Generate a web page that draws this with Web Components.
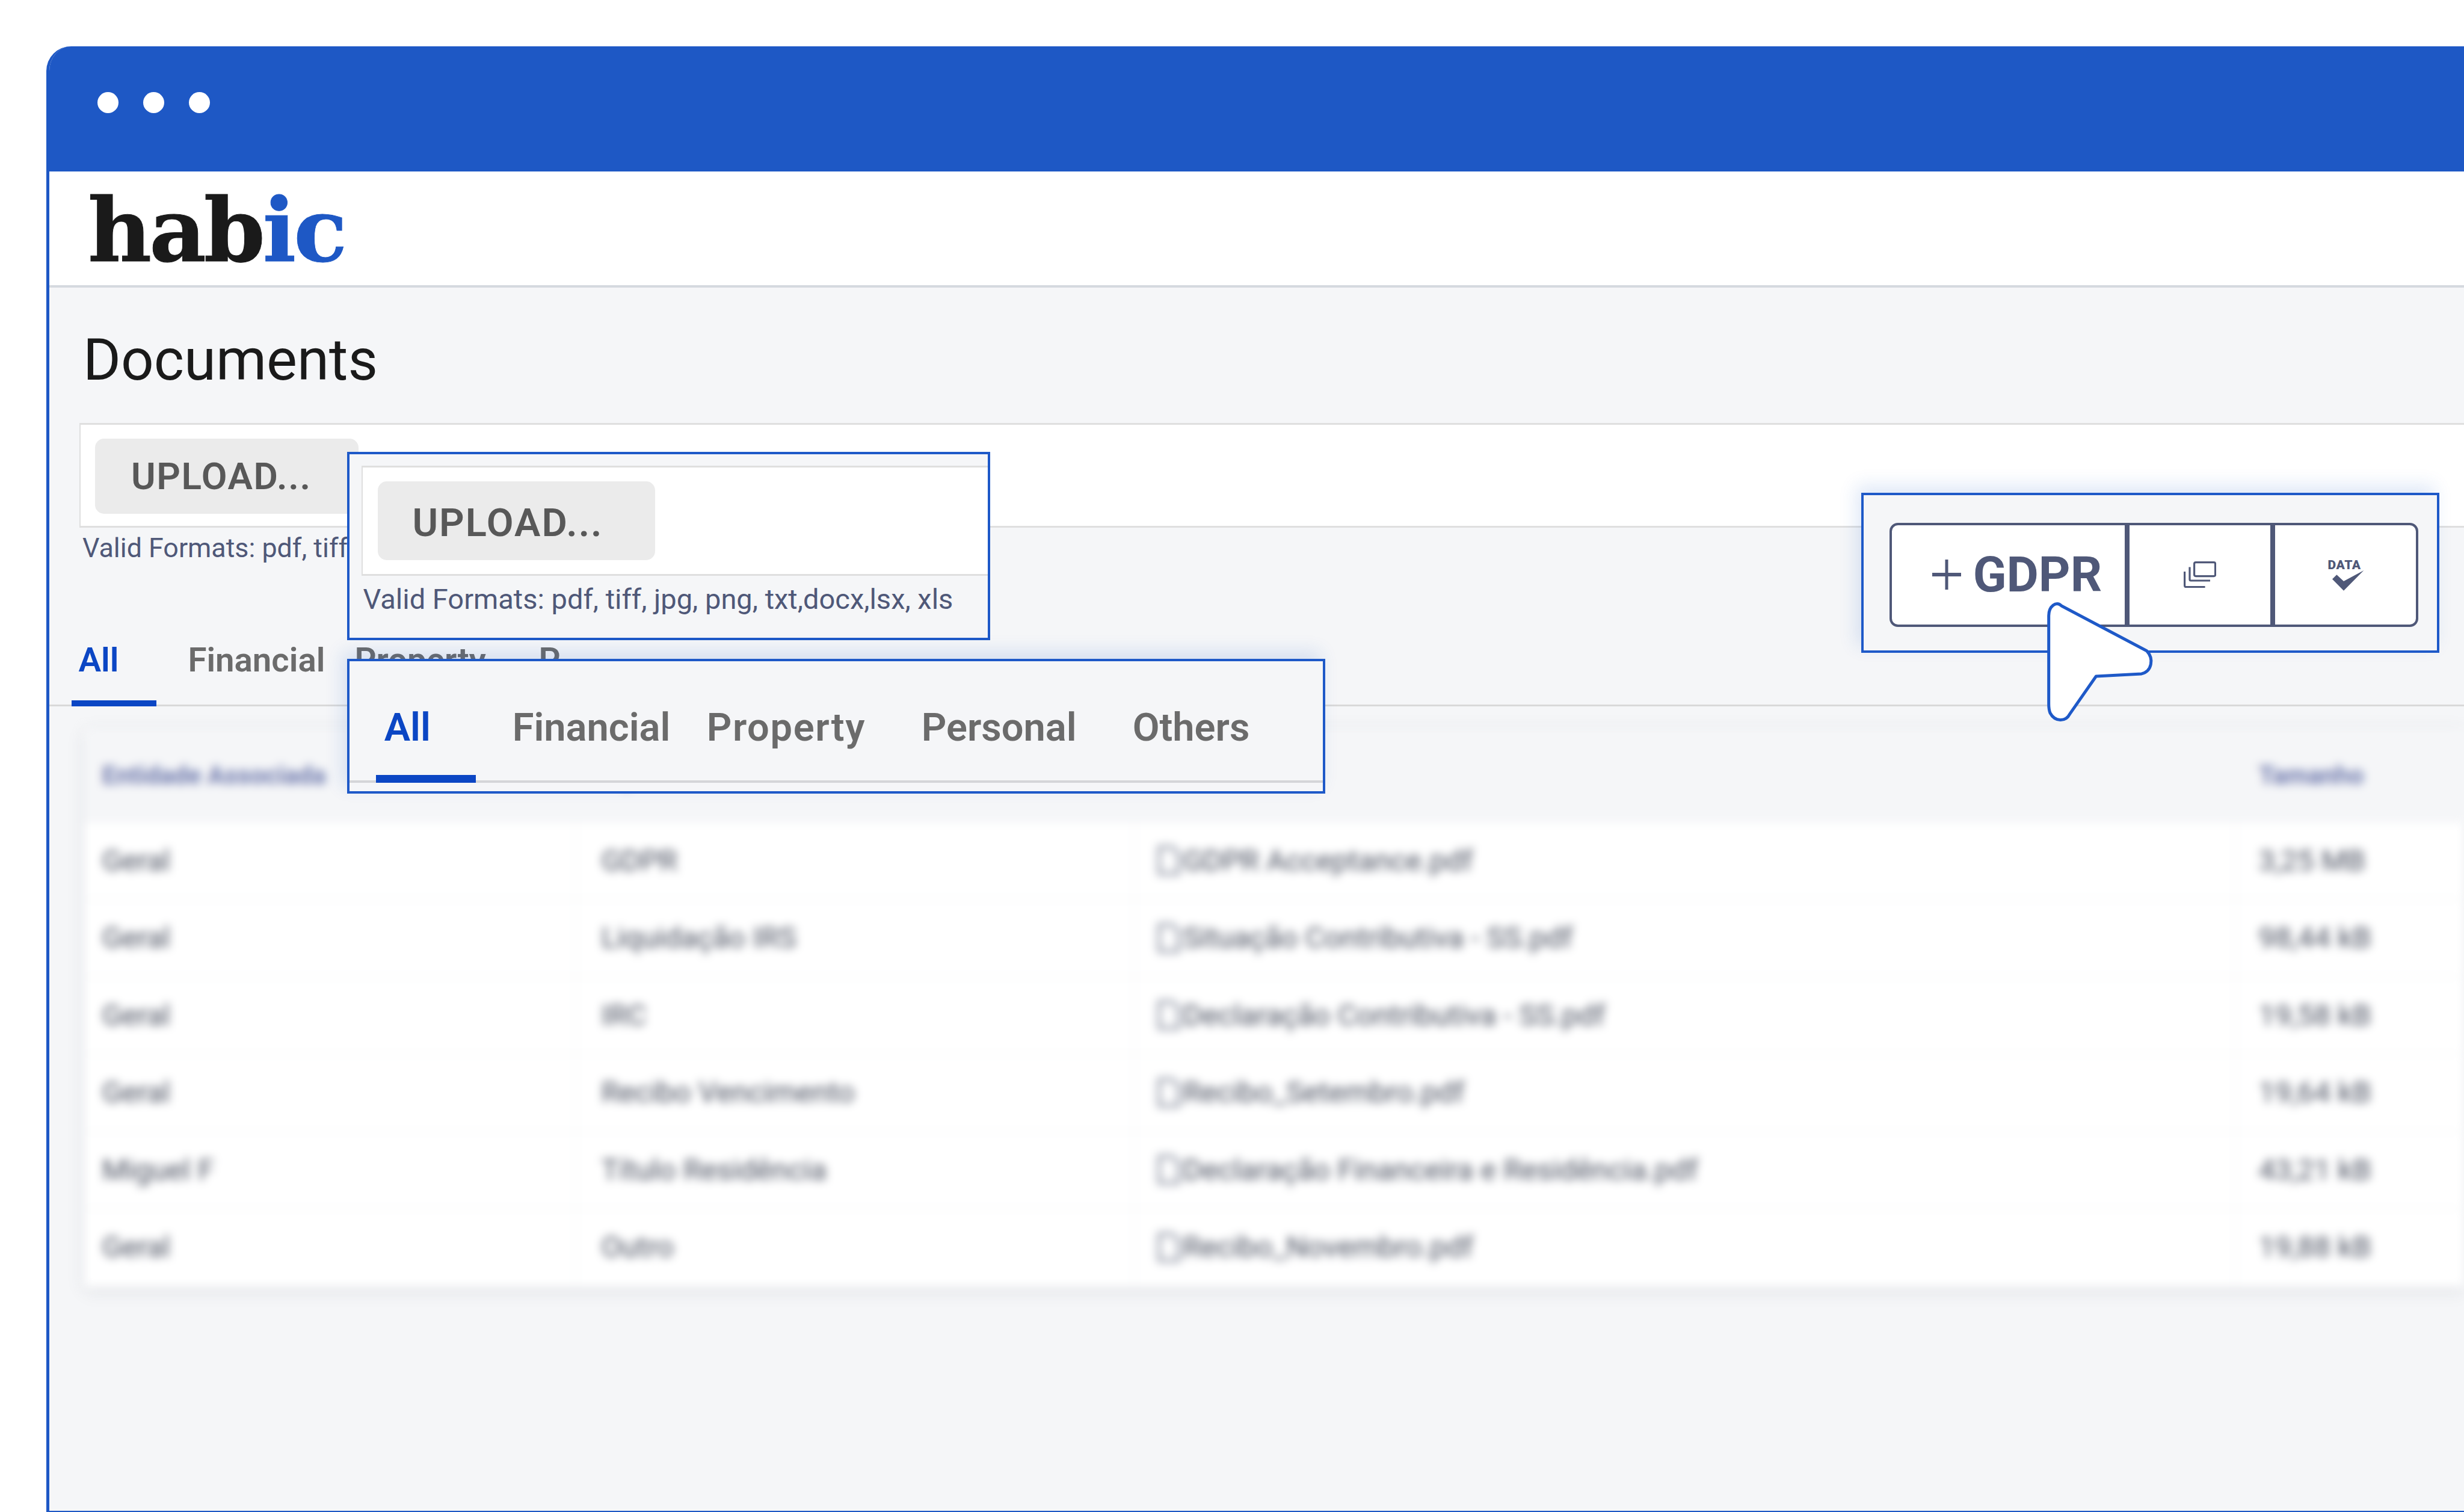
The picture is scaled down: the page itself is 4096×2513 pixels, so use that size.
<!DOCTYPE html>
<html>
<head>
<meta charset="utf-8">
<title>Documents</title>
<style>
  html, body { margin: 0; padding: 0; background: #fff; overflow: hidden; }
  body { font-family: Roboto, "Liberation Sans", sans-serif; }
</style>
</head>
<body>

<app-stage>
  <browser-frame>
    <brand-logo></brand-logo>
    <page-title>Documents</page-title>
    <upload-panel></upload-panel>
    <doc-tabs>
      <doc-tab active w="182">All</doc-tab>
      <doc-tab w="277">Financial</doc-tab>
      <doc-tab w="306">Property</doc-tab>
      <doc-tab w="302">P</doc-tab>
    </doc-tabs>
    <doc-table></doc-table>
  </browser-frame>

  <call-out style="left:577px;top:751px;width:1069px;height:313px;--glow:none">
    <upload-panel zoomed></upload-panel>
  </call-out>

  <call-out style="left:577px;top:1095px;width:1626px;height:224px">
    <doc-tabs zoomed>
      <doc-tab active w="213">All</doc-tab>
      <doc-tab w="323">Financial</doc-tab>
      <doc-tab w="357" style="letter-spacing:1.6px">Property</doc-tab>
      <doc-tab w="351">Personal</doc-tab>
      <doc-tab w="200">Others</doc-tab>
    </doc-tabs>
  </call-out>

  <call-out style="left:3094px;top:819px;width:961px;height:266px">
    <gdpr-actions></gdpr-actions>
  </call-out>

  <pointer-cursor></pointer-cursor>
</app-stage>

<script>
class AppStage extends HTMLElement {
  connectedCallback() {
    this.attachShadow({ mode: 'open' });
    this.shadowRoot.innerHTML = `
      <style>
        :host { display: block; position: relative; width: 4096px; height: 2513px; overflow: hidden; background: #fff; }
      </style>
      <slot></slot>
    `;
  }
}

class BrowserFrame extends HTMLElement {
  connectedCallback() {
    this.attachShadow({ mode: 'open' });
    this.shadowRoot.innerHTML = `
      <style>
        :host {
          display: flex; flex-direction: column; box-sizing: border-box;
          margin: 77px 0 0 77px; height: 2436px;
          border-left: 5.4px solid #1e58c5; border-bottom: 2.7px solid #1e58c5;
          border-top-left-radius: 41px;
          background: #f5f6f8; overflow: hidden;
        }
        .bar {
          flex: none; height: 208px; background: #1e58c5;
          margin-left: -5.4px; padding-left: 85px; box-sizing: border-box;
          display: flex; align-items: center; gap: 41px;
          padding-bottom: 21px;
        }
        .bar i { width: 35px; height: 35px; border-radius: 50%; background: #fff; }
      </style>
      <div class="bar"><i></i><i></i><i></i></div>
      <slot></slot>
    `;
  }
}

class BrandLogo extends HTMLElement {
  connectedCallback() {
    this.attachShadow({ mode: 'open' });
    this.shadowRoot.innerHTML = `
      <style>
        :host {
          display: flex; flex: none; align-items: center; box-sizing: border-box;
          height: 193px; padding: 6px 0 0 64px;
          background: #fff; border-bottom: 4.4px solid #d5d9df;
        }
        span {
          font: 700 146px/1 "DejaVu Serif", serif; letter-spacing: -4px;
          color: #1a1a1a; -webkit-text-stroke: 1px currentColor;
        }
        .ic { color: #1e58c5; }
      </style>
      <span>hab</span><span class="ic">ic</span>
    `;
  }
}

class PageTitle extends HTMLElement {
  connectedCallback() {
    this.attachShadow({ mode: 'open' });
    this.shadowRoot.innerHTML = `
      <style>
        :host {
          display: block; flex: none; padding: 63px 0 0 56px;
          font: 400 96px/114px Roboto, sans-serif; color: #1a1a1a;
        }
      </style>
      <slot></slot>
    `;
  }
}

class UploadPanel extends HTMLElement {
  connectedCallback() {
    this.attachShadow({ mode: 'open' });
    this.shadowRoot.innerHTML = `
      <style>
        :host {
          display: block; flex: none;
          margin: 48px 0 0 50.4px;
          --pad-x: 24px; --pad-t: 23px; --pad-b: 20px; --btn-w: 438px; --btn-h: 125px; --btn-l: 59.500px; --btn-t: 0px;
          --btn-font: 62px; --btn-track: 1.600px; --note-font: 44.8px; --note-top: 9px; --note-h: 50px; --note-l: 4.600px;
        }
        :host([zoomed]) {
          margin: 18.7px 0 0 20.4px;
          --pad-x: 25px; --pad-t: 23px; --pad-b: 23px; --btn-w: 461px; --btn-h: 131px; --btn-l: 57px; --btn-t: 8px;
          --btn-font: 65px; --btn-track: 2px; --note-font: 47px; --note-top: 10px; --note-h: 58px; --note-l: 2px;
        }
        .box {
          background: #fff; border: solid #dfdfdf; border-width: 3px 0 3px 2px;
          padding: var(--pad-t) var(--pad-x) var(--pad-b);
        }
        .btn {
          box-sizing: border-box; width: var(--btn-w); height: var(--btn-h);
          padding: var(--btn-t) 0 0 var(--btn-l);
          display: flex; align-items: center;
          background: #ebebeb; border-radius: 15px;
          font: 600 var(--btn-font)/1 Roboto, sans-serif; letter-spacing: var(--btn-track); color: #585858;
        }
        .note {
          margin-top: var(--note-top); padding-left: var(--note-l);
          font: 400 var(--note-font)/var(--note-h) Roboto, sans-serif; color: #4f5878; white-space: nowrap;
        }
      </style>
      <div class="box"><div class="btn">UPLOAD...</div></div>
      <div class="note">Valid Formats: pdf, tiff, jpg, png, txt,docx,lsx, xls</div>
    `;
  }
}

class DocTabs extends HTMLElement {
  connectedCallback() {
    this.attachShadow({ mode: 'open' });
    this.shadowRoot.innerHTML = `
      <style>
        :host {
          display: flex; flex: none; box-sizing: border-box;
          margin-top: 128px; padding-left: 48.4px;
          font: 600 56.4px/66px Roboto, sans-serif; color: #6b6b6b;
          border-bottom: 3px solid #d9d9d9;
          --tab-pad: 41px; --bar-x: -11px; --bar-w: 141px; --bar-h: 10px; --bar-over: 3px; --tab-active: #0b46c4;
        }
        :host([zoomed]) {
          margin: 72px 0 0 0; padding-left: 57.7px;
          font-size: 65px; line-height: 76px;
          border-bottom: 4px solid #d4d5d8;
          --tab-pad: 50px; --bar-x: -14px; --bar-w: 166px; --bar-h: 13px; --bar-over: 4px;
        }
      </style>
      <slot></slot>
    `;
  }
}

class DocTab extends HTMLElement {
  connectedCallback() {
    this.attachShadow({ mode: 'open' });
    const w = this.getAttribute('w');
    this.shadowRoot.innerHTML = `
      <style>
        :host {
          display: block; position: relative; flex: none; width: ${w}px;
          padding-bottom: var(--tab-pad); white-space: nowrap;
        }
        :host([active]) { color: var(--tab-active); }
        :host([active])::after {
          content: ''; position: absolute; bottom: calc(var(--bar-over) * -1);
          left: var(--bar-x); width: var(--bar-w); height: var(--bar-h);
          background: var(--tab-active);
        }
      </style>
      <slot></slot>
    `;
  }
}

const TABLE_HEAD = ['Entidade Associada', 'Tipo de Documento', 'Nome', 'Tamanho'];
const TABLE_ROWS = [
  ['Geral', 'GDPR', 'GDPR Acceptance.pdf', '3,25 MB'],
  ['Geral', 'Liquidação IRS', 'Situação Contributiva - SS.pdf', '98,44 kB'],
  ['Geral', 'IRC', 'Declaração Contributiva - SS.pdf', '19,58 kB'],
  ['Geral', 'Recibo Vencimento', 'Recibo_Setembro.pdf', '19,64 kB'],
  ['Miguel F', 'Título Residência', 'Declaração Financeira e Residência.pdf', '43,21 kB'],
  ['Geral', 'Outro', 'Recibo_Novembro.pdf', '19,88 kB'],
];

class DocTable extends HTMLElement {
  connectedCallback() {
    this.attachShadow({ mode: 'open' });
    const fileIcon = `<svg width="40" height="50" viewBox="0 0 40 50" fill="none" stroke="currentColor" stroke-width="5"><path d="M4 3h22l10 10v34H4z"/></svg>`;
    const pads = [28, 40, 36, 36];
    const head = TABLE_HEAD.map((t, i) => `<div class="cell head" style="padding-left:${pads[i]}px">${t}</div>`).join('');
    const rows = TABLE_ROWS.map(r => r.map((t, i) =>
      `<div class="cell" style="padding-left:${pads[i]}px">${i === 2 ? fileIcon : ''}<span>${t}</span></div>`).join('')).join('');
    this.shadowRoot.innerHTML = `
      <style>
        :host {
          display: block; flex: none; margin: 36.5px 0 0 59.4px;
          filter: blur(7.5px);
          box-shadow: 0 6px 26px rgba(40, 50, 70, .1);
        }
        .grid {
          display: grid; grid-template-columns: 818px 928px 1831px 400px;
          grid-template-rows: 157px; grid-auto-rows: 128.5px;
          font: 400 49px/1 Roboto, sans-serif; color: #4a5060;
          background: #fff;
        }
        .cell {
          display: flex; align-items: center; gap: 3px; box-sizing: border-box;
          white-space: nowrap;
          border-right: 3px solid #f6f7f8; border-bottom: 3px solid #f6f7f8;
        }
        .head {
          background: #f5f6f8; border-bottom: 0;
          font-weight: 700; font-size: 42px; color: #6e79ad;
        }
        svg { flex: none; color: #8a90a0; }
      </style>
      <div class="grid">${head}${rows}</div>
    `;
  }
}

class CallOut extends HTMLElement {
  connectedCallback() {
    this.attachShadow({ mode: 'open' });
    this.shadowRoot.innerHTML = `
      <style>
        :host {
          position: absolute; display: block; box-sizing: border-box; overflow: hidden;
          background: #f5f6f8; border: 4.3px solid #1e59c8;
        }
      </style>
      <slot></slot>
    `;
    const glow = this.style.getPropertyValue('--glow');
    if (glow !== 'none') this.style.boxShadow = '-8px -12px 28px rgba(30, 89, 200, .14)';
  }
}

class GdprActions extends HTMLElement {
  connectedCallback() {
    this.attachShadow({ mode: 'open' });
    this.shadowRoot.innerHTML = `
      <style>
        :host {
          display: flex; box-sizing: border-box; margin: 45.7px 0 0 42.7px;
          width: 879px; height: 173px;
          background: #fff; border: 4.3px solid #4f5878; border-radius: 14px;
          color: #4f5878; overflow: hidden;
        }
        .add {
          flex: none; border-right: 8px solid #4f5878;
          display: flex; align-items: center; padding-left: 67px; box-sizing: content-box;
          width: 320px; gap: 20px;
          font: 700 82px/1 Roboto, sans-serif;
        }
        .stack { flex: none; width: 234px; border-right: 8px solid #4f5878; display: flex; align-items: center; justify-content: center; }
        .data { flex: 1; display: flex; flex-direction: column; align-items: center; justify-content: center; padding-top: 2px; }
        .data span { font: 900 21px/17px Roboto, sans-serif; letter-spacing: .6px; margin-left: -3px; }
        .data svg { margin-left: 9px; }
        .plus { flex: none; }
        svg { display: block; }
      </style>
      <div class="add">
        <svg class="plus" width="48" height="50" viewBox="0 0 48 50" fill="none" stroke="#4f5878"><path d="M24 0v50" stroke-width="5"/><path d="M0 25h48" stroke-width="6"/></svg>
        <span>GDPR</span>
      </div>
      <div class="stack">
        <svg width="54" height="44" viewBox="0 0 54 44" fill="none" stroke="#4f5878" stroke-width="3.2">
          <rect x="17.6" y="1.6" width="35" height="23" rx="2.5"/>
          <path d="M10 9.500v20.500q0 2 2 2h32"/>
          <path d="M1.600 17v23.500q0 2 2 2h32"/>
        </svg>
      </div>
      <div class="data">
        <span>DATA</span>
        <svg width="53" height="34" viewBox="0 0 53 34" fill="#4f5878"><path d="M0 14.600 L7.400 7.300 L19 18.100 L52.400 0 L19 33.800 Z"/></svg>
      </div>
    `;
  }
}

class PointerCursor extends HTMLElement {
  connectedCallback() {
    this.attachShadow({ mode: 'open' });
    this.shadowRoot.innerHTML = `
      <style>
        :host { position: absolute; left: 3395px; top: 990px; display: block; width: 200px; height: 220px; }
        svg { display: block; overflow: visible; }
      </style>
      <svg width="200" height="220" viewBox="3395 990 200 220" fill="#fff" stroke="#1e59c8" stroke-width="5" stroke-linejoin="round">
        <path d="M3405.700 1023.300 C3405.700 1008 3418 998 3427 1007 L3568.600 1081.800 C3581 1095 3577 1116 3559.900 1119.900 L3484.400 1124 L3440.700 1186.600 C3434 1200 3416 1200 3408 1185 C3406 1180 3405.700 1176 3405.700 1170 Z"/>
      </svg>
    `;
  }
}

customElements.define('app-stage', AppStage);
customElements.define('browser-frame', BrowserFrame);
customElements.define('brand-logo', BrandLogo);
customElements.define('page-title', PageTitle);
customElements.define('upload-panel', UploadPanel);
customElements.define('doc-tabs', DocTabs);
customElements.define('doc-tab', DocTab);
customElements.define('doc-table', DocTable);
customElements.define('call-out', CallOut);
customElements.define('gdpr-actions', GdprActions);
customElements.define('pointer-cursor', PointerCursor);
</script>
</body>
</html>
